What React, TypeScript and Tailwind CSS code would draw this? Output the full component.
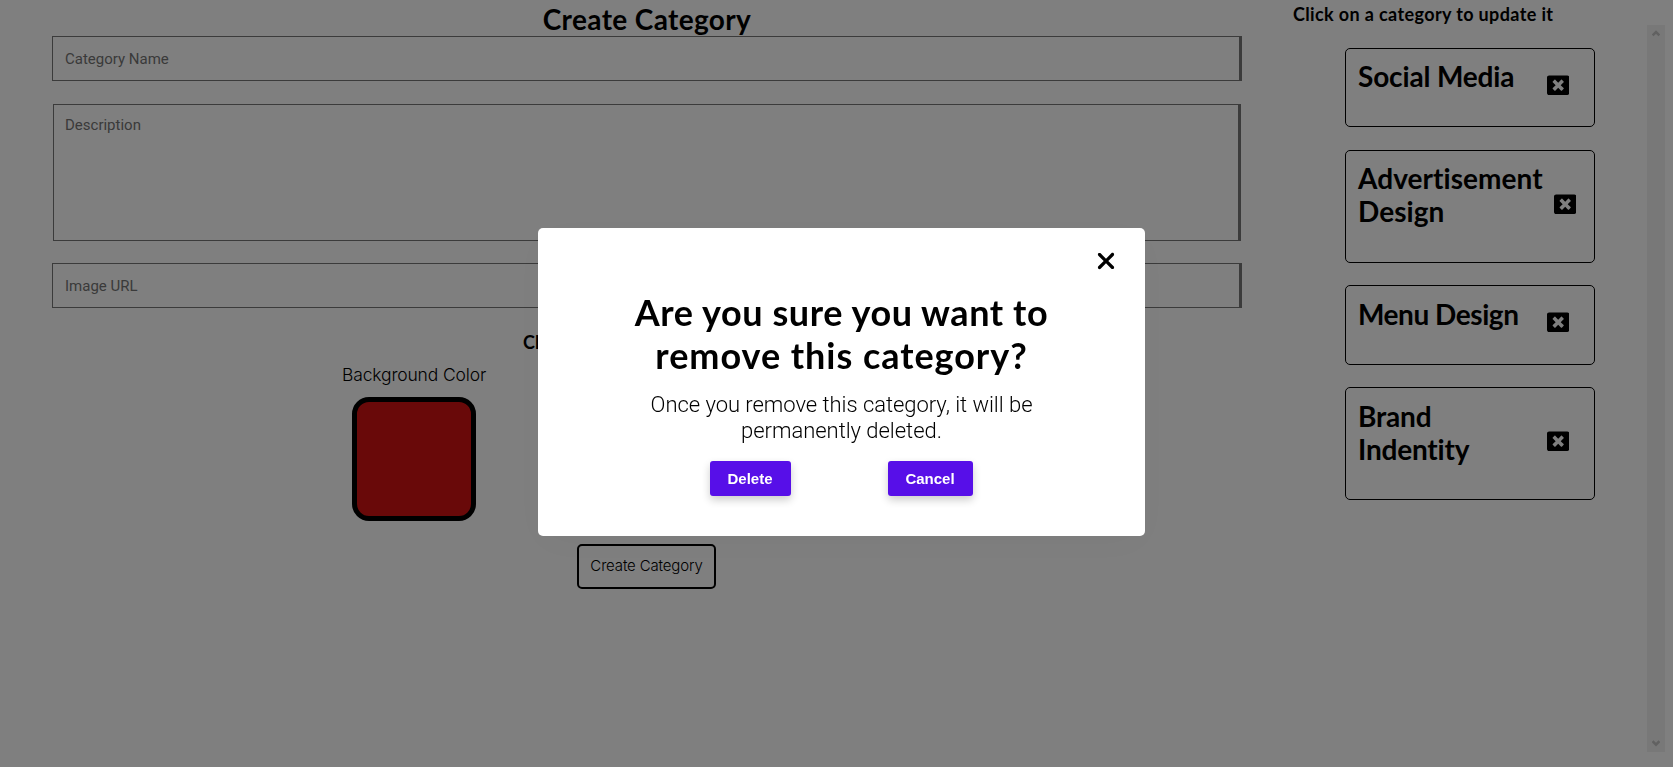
import { FaWindowClose } from 'react-icons/fa';
import { FaXmark } from 'react-icons/fa6';

const categories = [
  { lines: ['Social Media'], box: 'mb-[23px] h-[79px] pt-[11px]', text: 'tracking-[-0.15px]', icon: 'mt-[14px] mr-[25px]' },
  { lines: ['Advertisement', 'Design'], box: 'mb-[22px] h-[113px] pt-[11px]', text: 'tracking-[0.05px]', icon: 'mt-[31px] mr-[18px]' },
  { lines: ['Menu Design'], box: 'mb-[22px] h-[80px] pt-[12px]', text: 'tracking-[-0.45px]', icon: 'mt-[13px] mr-[25px]' },
  { lines: ['Brand', 'Indentity'], box: 'h-[113px] pt-[12px]', text: 'tracking-[-0.2px]', icon: 'mt-[30px] mr-[25px]' },
];

function CategoryForm() {
  return (
    <form className="flex w-[1190px] flex-col items-center">
      <h2 className="h-[36px] text-[28px] leading-[39px] font-bold tracking-[0.35px]">Create Category</h2>
      <input
        placeholder="Category Name"
        className="h-[45px] w-full border border-r-[3px] border-[#767676] px-3 font-[Roboto] text-[15px] placeholder:text-[#757575]"
      />
      <textarea
        placeholder="Description"
        className="mt-[23px] h-[137px] w-[1188px] resize-none border border-r-[3px] border-[#767676] px-[11px] pt-[11px] font-[Roboto] text-[15px] leading-[18px] placeholder:text-[#757575]"
      />
      <input
        placeholder="Image URL"
        className="mt-[22px] h-[45px] w-full border border-r-[3px] border-[#767676] px-3 font-[Roboto] text-[15px] placeholder:text-[#757575]"
      />
      <h4 className="mt-[22px] w-[248px] text-[18px] leading-[24px] font-bold whitespace-nowrap">Click on a color to update it</h4>
      <div className="mt-[8px] grid w-[932px] grid-cols-2">
        <div className="flex flex-col items-center">
          <span className="h-[35px] font-[Inter] text-[17.5px] leading-[26px] font-light tracking-[-0.15px]">Background Color</span>
          <span className="size-[124px] rounded-[17px] border-[5px] border-black bg-[#d21212]" />
        </div>
      </div>
      <button
        type="button"
        className="mt-[23px] mr-px h-[45px] w-[139px] rounded-[5px] border-2 border-black pb-px font-[Inter] text-[15px] font-light tracking-[-0.15px] whitespace-nowrap"
      >
        Create Category
      </button>
    </form>
  );
}

function CategoryList() {
  return (
    <aside className="flex w-[373px] flex-col">
      <h4 className="h-[25px] pl-[1px] text-[18px] leading-[28px] font-bold tracking-[0.37px] whitespace-nowrap">
        Click on a category to update it
      </h4>
      <div className="flex h-[727px] justify-between">
        <ul className="ml-[53px] w-[250px] pt-[23px]">
          {categories.map((c) => (
            <li key={c.lines[0]} className={`flex items-start justify-between rounded-[5px] border border-black pl-[12px] ${c.box}`}>
              <h3 className={`text-[28px] leading-[33.4px] font-bold whitespace-nowrap ${c.text}`}>
                {c.lines.map((l) => (
                  <span key={l} className="block">{l}</span>
                ))}
              </h3>
              <FaWindowClose className={`size-[22.4px] shrink-0 ${c.icon}`} />
            </li>
          ))}
        </ul>
        <div className="flex w-[18px] flex-col items-center justify-between bg-[#f1f1f1] py-[5px] text-[#c2c2c2]">
          <svg width="8" height="7" viewBox="0 0 8 7" fill="none" stroke="currentColor" strokeWidth="2.6">
            <path d="M.6 5.4 4 2l3.4 3.4" />
          </svg>
          <svg width="8" height="7" viewBox="0 0 8 7" fill="none" stroke="currentColor" strokeWidth="2.6">
            <path d="M.6 1.2 4 4.6l3.4-3.4" />
          </svg>
        </div>
      </div>
    </aside>
  );
}

function ConfirmDialog() {
  return (
    <div className="fixed inset-0 flex items-start justify-center bg-black/50 pt-[228px] pl-[10px]">
      <div className="flex h-[308px] w-[607px] flex-col items-center rounded-[5px] bg-white shadow-[0_8px_40px_rgba(0,0,0,0.03)]">
        <button type="button" className="mt-[20px] mr-[26px] self-end">
          <FaXmark className="size-[26px]" />
        </button>
        <h1 className="mt-[17px] text-center text-[36px] leading-[43px] font-bold whitespace-nowrap">
          <span className="block tracking-[0.57px]">Are you sure you want to</span>
          <span className="block tracking-[0.95px]">remove this category?</span>
        </h1>
        <p className="mt-[15px] w-[400px] text-center font-[Roboto] text-[22px] leading-[26px] font-light tracking-[-0.04px]">
          Once you remove this category, it will be permanently deleted.
        </p>
        <div className="mt-[17px] flex gap-[97px] pr-px font-['Liberation_Sans'] text-[15px] font-bold text-white">
          <button type="button" className="h-[35px] w-[81px] rounded-[3px] bg-[#570fe8] pt-px shadow-[0_4px_8px_rgba(0,0,0,0.2)]">Delete</button>
          <button type="button" className="h-[35px] w-[85px] rounded-[3px] bg-[#570fe8] pt-px shadow-[0_4px_8px_rgba(0,0,0,0.2)]">Cancel</button>
        </div>
      </div>
    </div>
  );
}

export default function App() {
  return (
    <main className="h-[767px] w-full overflow-hidden bg-white font-[Lato,sans-serif] text-black [font-variant-ligatures:none]">
      <div className="flex pl-[52px]">
        <CategoryForm />
        <div className="w-[50px] shrink-0" />
        <CategoryList />
      </div>
      <ConfirmDialog />
    </main>
  );
}
